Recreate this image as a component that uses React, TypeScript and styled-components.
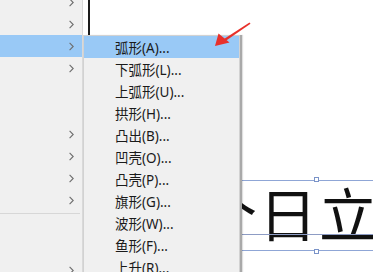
import React from "react";
import styled, { createGlobalStyle } from "styled-components";

const Global = createGlobalStyle`
  html, body { margin: 0; padding: 0; background: #ffffff; overflow: hidden; }
  #root { width: 373px; height: 272px; }
`;

const Stage = styled.div`
  position: relative;
  width: 373px;
  height: 272px;
  overflow: hidden;
  display: flex;
  background: #ffffff;
  font-family: "Noto Sans", "Noto Sans CJK SC", sans-serif;
`;

const Gutter = styled.div`
  width: 88px;
  flex: none;
  background: #ffffff;
`;

const DocumentArea = styled.div`
  position: relative;
  flex: 1;
  border-left: 2px solid #1c1c1c;
  background: #ffffff;
  overflow: hidden;
`;

const TextFrame = styled.div`
  position: absolute;
  left: 100px;
  top: 180px;
  width: 254px;
  height: 69px;
  border-top: 1px solid #8fa6d6;
  border-bottom: 1px solid #8fa6d6;
`;

const Baseline = styled.div`
  position: absolute;
  left: 0;
  right: 0;
  top: 53px;
  height: 1px;
  background: #8d9cc4;
`;

const Handle = styled.div<{ $bottom?: boolean }>`
  position: absolute;
  left: 124px;
  ${(p) => (p.$bottom ? "bottom: -4px;" : "top: -4px;")}
  width: 5px;
  height: 5px;
  box-sizing: border-box;
  border: 1px solid #7a93c8;
  background: #ffffff;
`;

const FrameText = styled.div`
  position: absolute;
  left: 9px;
  top: -4px;
  font-family: "Noto Sans CJK SC", serif;
  font-weight: 400;
  font-size: 58px;
  line-height: 70px;
  letter-spacing: 2px;
  color: #111111;
  white-space: nowrap;
`;

const LeftMenu = styled.div`
  position: absolute;
  left: 0;
  top: -9px;
  width: 82px;
  height: 300px;
  background: #f0f0f0;
  border-right: 1px solid #d9d9d9;
  display: flex;
  flex-direction: column;
`;

const LeftRow = styled.div<{ $active?: boolean }>`
  height: 22px;
  flex: none;
  display: flex;
  align-items: center;
  justify-content: flex-end;
  padding-right: 8px;
  background: ${(p) => (p.$active ? "#99c9f6" : "transparent")};
`;

const Separator = styled.div`
  flex: none;
  height: 1px;
  margin: 2px 2px 1px 0;
  background: #d7d7d7;
`;

const SubMenu = styled.div`
  position: absolute;
  left: 83px;
  top: 35px;
  width: 155px;
  height: 260px;
  background: #f0f0f0;
  border: 1px solid #d2d2d2;
  box-shadow: 2px 0 0 #a9a9a9, 3px 0 1px rgba(0,0,0,0.12);
  display: flex;
  flex-direction: column;
`;

const SubItem = styled.div<{ $active?: boolean }>`
  height: 22px;
  flex: none;
  display: flex;
  align-items: center;
  padding-left: 31px;
  font-family: "Noto Sans", "Noto Sans CJK SC", sans-serif;
  font-size: 13.5px;
  color: #1a1a1a;
  background: ${(p) => (p.$active ? "#99c9f6" : "transparent")};
`;

const Arrow = styled.svg`
  position: absolute;
  left: 210px;
  top: 18px;
  width: 44px;
  height: 32px;
  overflow: visible;
`;

const Chevron = () => (
  <svg width="5" height="9" viewBox="0 0 5 9">
    <polyline points="0.6,0.8 4.2,4.5 0.6,8.2" fill="none" stroke="#6e6e6e" strokeWidth="1.1" />
  </svg>
);

const leftRows: { chevron: boolean; active?: boolean; sepBefore?: boolean }[] = [
  { chevron: true },
  { chevron: true },
  { chevron: true, active: true },
  { chevron: true },
  { chevron: false },
  { chevron: false },
  { chevron: true },
  { chevron: true },
  { chevron: true },
  { chevron: true },
  { chevron: false, sepBefore: true },
  { chevron: false },
  { chevron: true },
];

const subItems = [
  "弧形(A)...",
  "下弧形(L)...",
  "上弧形(U)...",
  "拱形(H)...",
  "凸出(B)...",
  "凹壳(O)...",
  "凸壳(P)...",
  "旗形(G)...",
  "波形(W)...",
  "鱼形(F)...",
  "上升(R)...",
];

export default function App() {
  return (
    <>
      <Global />
      <Stage>
        <Gutter />
        <DocumentArea>
          <TextFrame>
            <FrameText>个日立</FrameText>
            <Baseline />
            <Handle />
            <Handle $bottom />
          </TextFrame>
        </DocumentArea>

        <LeftMenu>
          {leftRows.map((r, i) => (
            <React.Fragment key={i}>
              {r.sepBefore && <Separator />}
              <LeftRow $active={r.active}>{r.chevron && <Chevron />}</LeftRow>
            </React.Fragment>
          ))}
        </LeftMenu>

        <SubMenu>
          {subItems.map((t, i) => (
            <SubItem key={t} $active={i === 0}>
              {t}
            </SubItem>
          ))}
        </SubMenu>

        <Arrow viewBox="210 18 44 32">
          <path d="M249.5 22.5 L224 39 L225.5 41 L250.5 23.8 Z" fill="#e8302a" />
          <polygon points="215,46 218.5,33.5 229.5,42.5" fill="#e8302a" />
        </Arrow>
      </Stage>
    </>
  );
}
